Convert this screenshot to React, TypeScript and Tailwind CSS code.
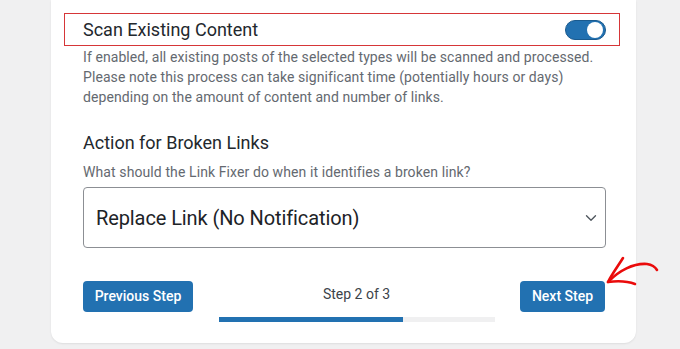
import { ChevronDown } from 'lucide-react';

function Toggle() {
  return (
    <div className="flex h-[20px] w-[41px] items-center justify-end rounded-full border border-[#1a5a8e] bg-[#2271b1] px-[2px]">
      <div className="h-[16px] w-[16px] rounded-full bg-white" />
    </div>
  );
}

function HandArrow() {
  return (
    <svg
      className="absolute left-[600px] top-[250px]"
      width="64"
      height="42"
      viewBox="600 250 64 42"
      fill="none"
      stroke="#ea0b0b"
      strokeWidth="2.6"
      strokeLinecap="round"
      strokeLinejoin="round"
    >
      <path d="M609 281 C 619 271, 633 263, 647 264 Q 654 265, 657 270" />
      <path d="M623 258 C 618 266, 612 274, 608 282" />
      <path d="M608 282 C 616 281, 627 281, 635 284" />
    </svg>
  );
}

export default function App() {
  return (
    <div
      className="relative h-[349px] w-[680px] overflow-hidden bg-[#f0f0f1]"
      style={{ fontFamily: 'Roboto, "Noto Sans", sans-serif' }}
    >
      <div className="ml-[51px] flex h-[343px] w-[585px] flex-col rounded-b-[12px] bg-white pl-[32px] pr-[30px] pt-[13px] shadow-[0_1px_2px_rgba(0,0,0,0.08)]">
        <div className="relative flex h-[33px] items-center justify-between">
          <div className="pointer-events-none absolute -left-[19px] -right-[14px] top-0 bottom-0 border border-[#d63638]" />
          <span className="text-[18px] leading-[24px] text-[#23282d]">Scan Existing Content</span>
          <Toggle />
        </div>
        <p className="mt-px text-[14px] leading-[20px] tracking-[0.08px] text-[#646970]">
          If enabled, all existing posts of the selected types will be scanned and processed.
          <br />
          Please note this process can take significant time (potentially hours or days)
          <br />
          depending on the amount of content and number of links.
        </p>

        <h3 className="mt-[24px] text-[18px] leading-[24px] text-[#23282d]">Action for Broken Links</h3>
        <p className="mt-[7px] text-[14px] leading-[20px] tracking-[0.1px] text-[#646970]">
          What should the Link Fixer do when it identifies a broken link?
        </p>
        <div className="mt-[5px] flex h-[61px] items-center justify-between rounded-[4px] border border-[#8c8f94] pl-[12px] pr-[5px]">
          <span className="text-[20px] leading-[28px] tracking-[-0.1px] text-[#1d2327]">Replace Link (No Notification)</span>
          <ChevronDown size={18} strokeWidth={1.8} className="text-[#50575e]" />
        </div>

        <div className="mt-[33px] flex items-start justify-between">
          <button className="h-[31px] w-[110px] rounded-[4px] bg-[#2271b1] text-[14px] font-medium text-white">
            Previous Step
          </button>
          <div className="flex flex-col items-center pt-[3px]">
            <span className="text-[14px] leading-[20px] text-[#3c434a]">Step 2 of 3</span>
            <div className="mt-[13px] h-[5px] w-[276px] bg-[#f0f0f1]">
              <div className="h-full w-[184px] bg-[#2271b1]" />
            </div>
          </div>
          <button className="mr-px h-[31px] w-[85px] rounded-[4px] bg-[#2271b1] text-[14px] font-medium text-white">
            Next Step
          </button>
        </div>
      </div>
      <HandArrow />
    </div>
  );
}
